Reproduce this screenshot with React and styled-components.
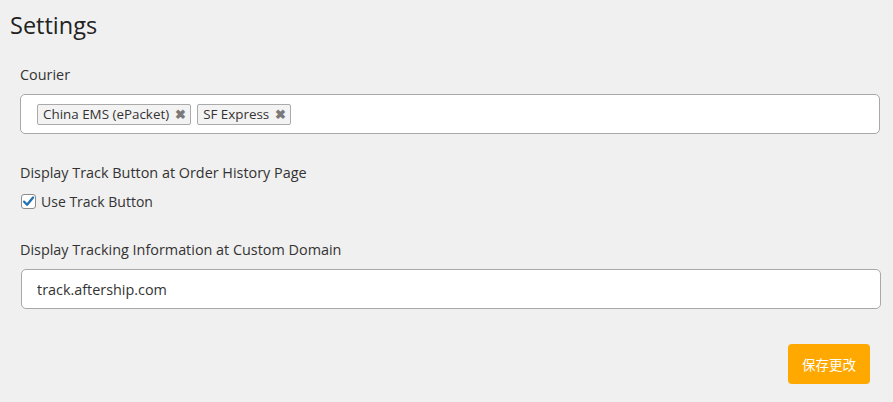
import React from 'react';
import styled, { createGlobalStyle } from 'styled-components';

const GlobalStyle = createGlobalStyle`
  body {
    margin: 0;
    background: #f0f0f0;
    font-family: "Open Sans", "Noto Sans", "Noto Sans CJK SC", sans-serif;
    color: #333;
  }
`;

const Page = styled.div`
  padding: 9px 13px 0 10px;
`;

const Title = styled.h1`
  margin: 0 0 23px;
  font-size: 23.5px;
  font-weight: 400;
  line-height: 33px;
  color: #222;
`;

const Field = styled.div`
  padding-left: 10px;
  margin-bottom: ${props => props.gap || 28}px;
`;

const Label = styled.div`
  font-size: 14.4px;
  line-height: 20px;
  color: #333;
  margin-bottom: ${props => props.space || 10}px;
`;

const TagBox = styled.div`
  display: flex;
  align-items: center;
  gap: 6px;
  height: 40px;
  box-sizing: border-box;
  padding: 0 16px;
  background: #fff;
  border: 1px solid #a8a8a8;
  border-radius: 5px;
`;

const Tag = styled.span`
  display: inline-flex;
  align-items: center;
  gap: 6px;
  height: 21px;
  box-sizing: border-box;
  padding: 0 4px 0 5px;
  background: #f3f3f3;
  border: 1px solid #aaa;
  border-radius: 2px;
  font-size: 13.4px;
  color: #333;
`;

const Remove = styled.span`
  font-size: 13px;
  font-weight: 700;
  color: #7a7a7a;
  line-height: 1;
`;

const CheckRow = styled.label`
  display: flex;
  align-items: center;
  gap: 5px;
  font-size: 14px;
  color: #333;
`;

const Box = styled.span`
  display: inline-flex;
  align-items: center;
  justify-content: center;
  width: 15px;
  height: 15px;
  margin-left: 1px;
  box-sizing: border-box;
  background: #fff;
  border: 1px solid #8c8c8c;
  border-radius: 3px;
`;

const TextInput = styled.input`
  display: block;
  width: 100%;
  height: 40px;
  box-sizing: border-box;
  margin-left: 1px;
  padding: 0 15px;
  background: #fff;
  border: 1px solid #a8a8a8;
  border-radius: 5px;
  font-family: inherit;
  font-size: 14.4px;
  color: #333;
  outline: none;
`;

const Footer = styled.div`
  display: flex;
  justify-content: flex-end;
  padding-right: 10px;
`;

const SaveButton = styled.button`
  width: 82px;
  height: 40px;
  border: none;
  border-radius: 4px;
  background: #ffa800;
  color: #fff;
  font-family: "Noto Sans CJK SC", sans-serif;
  font-size: 13.5px;
`;

export default function App() {
  return (
    <>
      <GlobalStyle />
      <Page>
        <Title>Settings</Title>
        <Field gap={29}>
          <Label space={9}>Courier</Label>
          <TagBox>
            <Tag>China EMS (ePacket)<Remove>✖</Remove></Tag>
            <Tag>SF Express<Remove>✖</Remove></Tag>
          </TagBox>
        </Field>
        <Field gap={29}>
          <Label space={9}>Display Track Button at Order History Page</Label>
          <CheckRow>
            <Box>
              <svg width="13" height="13" viewBox="0 0 12 12">
                <path d="M2 6.2 L4.7 9 L10.2 2.4" fill="none" stroke="#2271b1" strokeWidth="2.2" strokeLinecap="round" strokeLinejoin="round" />
              </svg>
            </Box>
            Use Track Button
          </CheckRow>
        </Field>
        <Field gap={35}>
          <Label space={9}>Display Tracking Information at Custom Domain</Label>
          <TextInput defaultValue="track.aftership.com" />
        </Field>
        <Footer>
          <SaveButton>保存更改</SaveButton>
        </Footer>
      </Page>
    </>
  );
}
